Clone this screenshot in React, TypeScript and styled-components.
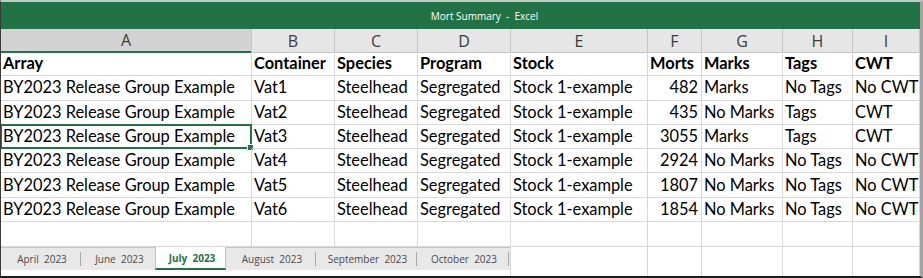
import { Fragment } from "react";
import styled, { createGlobalStyle } from "styled-components";

const COLS = "251px 83px 83px 93px 137px 54px 81px 70px 67px";
const green = "#217346";
const grid = "#d8d8d8";

const GlobalStyle = createGlobalStyle`
    html, body {
        margin: 0;
        padding: 0;
        background: #ffffff;
    }
`

const Window = styled.div`
    width: 923px;
    height: 278px;
    box-sizing: border-box;
    border-top: 2px solid #c3cbc5;
    border-left: 1px solid #3a3a3a;
    border-right: 3px solid #a3a3a3;
    border-bottom: 2px solid #1b1b1b;
    display: flex;
    flex-direction: column;
    overflow: hidden;
    background: #fff;
`

const TitleBar = styled.div`
    height: 27px;
    flex: none;
    background: ${green};
    color: #ffffff;
    font-family: "Open Sans", sans-serif;
    font-size: 10px;
    white-space: pre;
    display: flex;
    align-items: center;
    justify-content: center;
    padding-left: 48px;
`

const SheetRow = styled.div<{ $h: number }>`
    display: grid;
    grid-template-columns: ${COLS};
    height: ${(p) => p.$h}px;
    flex: none;
`

const ColHead = styled.div<{ $active?: boolean }>`
    box-sizing: border-box;
    background: ${(p) => (p.$active ? "#d3d3d3" : "#e6e6e6")};
    border-right: 1px solid #c4c4c4;
    border-bottom: ${(p) => (p.$active ? `2px solid ${green}` : "1px solid #c4c4c4")};
    color: #3c3c3c;
    font-family: "Open Sans", sans-serif;
    font-size: 16px;
    display: flex;
    align-items: center;
    justify-content: center;
`

const Cell = styled.div<{ $bold?: boolean; $right?: boolean; $last?: boolean }>`
    box-sizing: border-box;
    position: relative;
    border-right: 1px solid ${grid};
    border-bottom: ${(p) => (p.$last ? "none" : `1px solid ${grid}`)};
    padding: 0 3px 2px 2px;
    font-family: Lato, "Liberation Sans", sans-serif;
    font-size: 16.4px;
    font-weight: ${(p) => (p.$bold ? 700 : 400)};
    color: #000;
    display: flex;
    align-items: center;
    justify-content: ${(p) => (p.$right ? "flex-end" : "flex-start")};
    white-space: nowrap;
    overflow: visible;
`

const Selection = styled.div`
    position: absolute;
    top: -1px;
    left: -1px;
    right: -1px;
    bottom: -1px;
    border: 2px solid ${green};
    pointer-events: none;
`

const Handle = styled.div`
    position: absolute;
    right: -4px;
    bottom: -4px;
    width: 5px;
    height: 5px;
    background: ${green};
    border: 1px solid #fff;
`

const TabBar = styled.div`
    grid-column: 1 / 5;
    display: flex;
    flex-direction: column;
    border-right: 1px solid ${grid};
`

const TabStrip = styled.div`
    height: 22px;
    flex: none;
    background: #e8e8e8;
    border-top: 1px solid #c6c6c6;
    display: flex;
    align-items: stretch;
`

const Tab = styled.div<{ $w: number; $active?: boolean }>`
    box-sizing: border-box;
    width: ${(p) => p.$w}px;
    flex: none;
    display: flex;
    align-items: center;
    justify-content: center;
    padding-left: 3px;
    white-space: pre;
    font-family: "Open Sans", sans-serif;
    font-size: 10px;
    color: ${(p) => (p.$active ? green : "#4a4a4a")};
    font-weight: ${(p) => (p.$active ? 700 : 400)};
    background: ${(p) => (p.$active ? "#ffffff" : "transparent")};
    border-bottom: ${(p) => (p.$active ? `2px solid ${green}` : "none")};
    border-left: ${(p) => (p.$active ? "1px solid #c0c0c0" : "none")};
    border-right: ${(p) => (p.$active ? "1px solid #c0c0c0" : "none")};
    margin-top: ${(p) => (p.$active ? "-1px" : "0")};
`

const TabSep = styled.span`
    width: 1px;
    height: 14px;
    align-self: center;
    background: #a9a9a9;
    flex: none;
`

const headers = ["Array", "Container", "Species", "Program", "Stock", "Morts", "Marks", "Tags", "CWT"];

const rows = [
    ["Vat1", "482", "Marks", "No Tags", "No CWT"],
    ["Vat2", "435", "No Marks", "Tags", "CWT"],
    ["Vat3", "3055", "Marks", "Tags", "CWT"],
    ["Vat4", "2924", "No Marks", "No Tags", "No CWT"],
    ["Vat5", "1807", "No Marks", "No Tags", "No CWT"],
    ["Vat6", "1854", "No Marks", "No Tags", "No CWT"],
];

const tabs = [
    { name: "April  2023", w: 79 },
    { name: "June  2023", w: 74 },
    { name: "July  2023", w: 71, active: true },
    { name: "August  2023", w: 89 },
    { name: "September  2023", w: 100 },
    { name: "October  2023", w: 91 },
];

export default function App() {
    return (
        <>
            <GlobalStyle />
            <Window>
                <TitleBar>{"Mort Summary  -  Excel"}</TitleBar>
                <SheetRow $h={23}>
                    {"ABCDEFGHI".split("").map((l, i) => (
                        <ColHead key={l} $active={i === 0}>{l}</ColHead>
                    ))}
                </SheetRow>
                <SheetRow $h={24.3}>
                    {headers.map((h) => (
                        <Cell key={h} $bold>{h}</Cell>
                    ))}
                </SheetRow>
                {rows.map((r, i) => (
                    <SheetRow key={r[0]} $h={24.3}>
                        <Cell>
                            BY2023 Release Group Example
                            {i === 2 && (
                                <Selection>
                                    <Handle />
                                </Selection>
                            )}
                        </Cell>
                        <Cell>{r[0]}</Cell>
                        <Cell>Steelhead</Cell>
                        <Cell>Segregated</Cell>
                        <Cell>Stock 1-example</Cell>
                        <Cell $right>{r[1]}</Cell>
                        <Cell>{r[2]}</Cell>
                        <Cell>{r[3]}</Cell>
                        <Cell>{r[4]}</Cell>
                    </SheetRow>
                ))}
                <SheetRow $h={25}>
                    {headers.map((h) => (
                        <Cell key={h} />
                    ))}
                </SheetRow>
                <SheetRow $h={29}>
                    <TabBar>
                        <TabStrip>
                            {tabs.map((t, i) => (
                                <Fragment key={t.name}>
                                    <Tab $w={t.w} $active={t.active}>{t.name}</Tab>
                                    {!t.active && !tabs[i + 1]?.active && <TabSep />}
                                </Fragment>
                            ))}
                        </TabStrip>
                    </TabBar>
                    {headers.slice(4).map((h) => (
                        <Cell key={h} $last />
                    ))}
                </SheetRow>
            </Window>
        </>
    )
}
